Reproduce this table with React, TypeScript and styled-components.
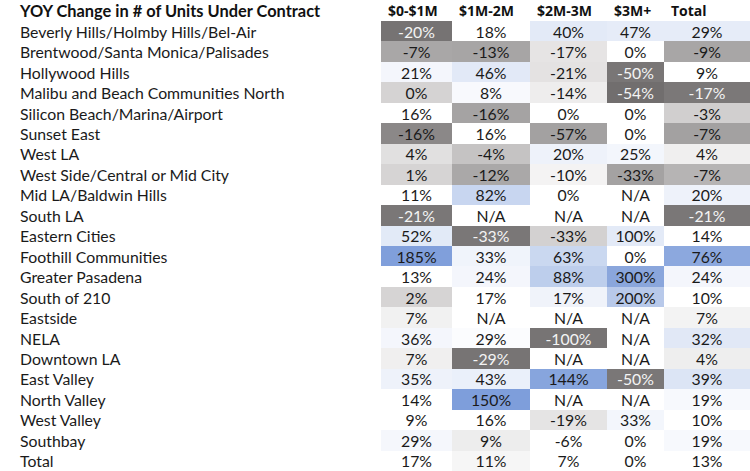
import React from "react";
import styled, { createGlobalStyle } from "styled-components";

const Global = createGlobalStyle`
  html, body { margin: 0; padding: 0; background: #ffffff; }
  #root { width: 750px; height: 471px; overflow: hidden; }
`;

type Cell = { v: string; bg: string; dark?: boolean };

const W = "#ffffff";
const D = (v: string, bg: string): Cell => ({ v, bg, dark: true });
const C = (v: string, bg: string = W): Cell => ({ v, bg });

const rows: { label: string; cells: Cell[] }[] = [
  { label: "Beverly Hills/Holmby Hills/Bel-Air", cells: [D("-20%", "#767373"), C("18%"), C("40%", "#e3eaf7"), C("47%", "#e6ecf8"), C("29%", "#e6ecf8")] },
  { label: "Brentwood/Santa Monica/Palisades", cells: [C("-7%", "#a9a7a7"), C("-13%", "#a7a5a5"), C("-17%", "#e6e4e4"), C("0%"), C("-9%", "#a8a6a6")] },
  { label: "Hollywood Hills", cells: [C("21%", "#f4f6fc"), C("46%", "#e2e9f7"), C("-21%", "#e4e2e2"), D("-50%", "#797676"), C("9%")] },
  { label: "Malibu and Beach Communities North", cells: [C("0%", "#d5d3d3"), C("8%", "#f8f9fd"), C("-14%", "#eeeded"), D("-54%", "#716e6e"), D("-17%", "#7b7878")] },
  { label: "Silicon Beach/Marina/Airport", cells: [C("16%"), C("-16%", "#a5a3a3"), C("0%"), C("0%"), C("-3%", "#d1cfcf")] },
  { label: "Sunset East", cells: [C("-16%", "#8b8888"), C("16%"), C("-57%", "#a3a1a1"), C("0%"), C("-7%", "#a3a1a1")] },
  { label: "West LA", cells: [C("4%", "#e1e0e0"), C("-4%", "#c5c3c3"), C("20%", "#eef2fa"), C("25%", "#f3f6fc"), C("4%", "#f0efef")] },
  { label: "West Side/Central or Mid City", cells: [C("1%", "#d6d4d4"), C("-12%", "#aaa8a8"), C("-10%", "#f4f3f3"), C("-33%", "#a4a2a2"), C("-7%", "#b6b4b4")] },
  { label: "Mid LA/Baldwin Hills", cells: [C("11%"), C("82%", "#c8d6f0"), C("0%"), C("N/A"), C("20%", "#eef2fa")] },
  { label: "South LA", cells: [D("-21%", "#7a7777"), C("N/A"), C("N/A"), C("N/A"), D("-21%", "#7a7777")] },
  { label: "Eastern Cities", cells: [C("52%", "#e2eaf7"), D("-33%", "#7a7777"), C("-33%", "#d3d1d1"), C("100%", "#e3eaf7"), C("14%")] },
  { label: "Foothill Communities", cells: [C("185%", "#809fdb"), C("33%", "#f0f4fb"), C("63%", "#cad8f0"), C("0%"), C("76%", "#8ca8de")] },
  { label: "Greater Pasadena", cells: [C("13%"), C("24%", "#f4f6fc"), C("88%", "#bdceec"), C("300%", "#8aa6dc"), C("24%", "#f4f6fc")] },
  { label: "South of 210", cells: [C("2%", "#d6d4d4"), C("17%"), C("17%", "#f0f3fa"), C("200%", "#b8c9ea"), C("10%")] },
  { label: "Eastside", cells: [C("7%", "#f1f1f1"), C("N/A"), C("N/A"), C("N/A"), C("7%", "#f3f3f3")] },
  { label: "NELA", cells: [C("36%", "#f4f6fc"), C("29%", "#fbfcfe"), D("-100%", "#777474"), C("N/A"), C("32%", "#e1e8f6")] },
  { label: "Downtown LA", cells: [C("7%", "#f0efef"), D("-29%", "#777474"), C("N/A"), C("N/A"), C("4%", "#eeeeee")] },
  { label: "East Valley", cells: [C("35%", "#eef2fa"), C("43%", "#eaf0fa"), C("144%", "#87a5dd"), D("-50%", "#7a7777"), C("39%", "#dce5f5")] },
  { label: "North Valley", cells: [C("14%"), C("150%", "#7e9edb"), C("N/A"), C("N/A"), C("19%", "#f7f9fd")] },
  { label: "West Valley", cells: [C("9%"), C("16%"), C("-19%", "#e5e4e4"), C("33%", "#f3f6fc"), C("10%")] },
  { label: "Southbay", cells: [C("29%", "#f5f7fc"), C("9%", "#ededed"), C("-6%"), C("0%"), C("19%", "#f7f9fd")] },
  { label: "Total", cells: [C("17%"), C("11%", "#f6f6f6"), C("7%"), C("0%"), C("13%")] },
];

const headers = ["$0-$1M", "$1M-2M", "$2M-3M", "$3M+", "Total"];

const Table = styled.div`
  display: grid;
  width: 750px;
  height: 471px;
  grid-template-columns: 381px 71px 78px 77px 57px 86px;
  grid-template-rows: 21px repeat(22, 1fr);
  background: #ffffff;
  color: #1a1a1a;
`;

const Title = styled.div`
  display: flex;
  align-items: center;
  padding-left: 20px;
  font-family: "Lato", "Open Sans", sans-serif;
  font-weight: 700;
  font-size: 16.4px;
  color: #111111;
  white-space: nowrap;
`;

const HeaderCell = styled.div`
  display: flex;
  align-items: center;
  padding-left: 7px;
  font-family: "Open Sans", "Liberation Sans", sans-serif;
  font-weight: 700;
  font-size: 14px;
  color: #111111;
  white-space: nowrap;
`;

const Label = styled.div`
  display: flex;
  align-items: center;
  padding-left: 20px;
  font-family: "Lato", "Open Sans", sans-serif;
  font-size: 15.8px;
  color: #1a1a1a;
  white-space: nowrap;
`;

const Value = styled.div<{ $bg: string; $dark?: boolean }>`
  display: flex;
  align-items: center;
  justify-content: center;
  background: ${(p) => p.$bg};
  color: ${(p) => (p.$dark ? "#f4f4f4" : "#1a1a1a")};
  font-family: "Lato", "Open Sans", sans-serif;
  font-size: 15.8px;
  white-space: nowrap;
`;

export default function App() {
  return (
    <>
      <Global />
      <Table>
        <Title>YOY Change in # of Units Under Contract</Title>
        {headers.map((h) => (
          <HeaderCell key={h}>{h}</HeaderCell>
        ))}
        {rows.map((r) => (
          <React.Fragment key={r.label}>
            <Label>{r.label}</Label>
            {r.cells.map((c, i) => (
              <Value key={i} $bg={c.bg} $dark={c.dark}>
                {c.v}
              </Value>
            ))}
          </React.Fragment>
        ))}
      </Table>
    </>
  );
}
